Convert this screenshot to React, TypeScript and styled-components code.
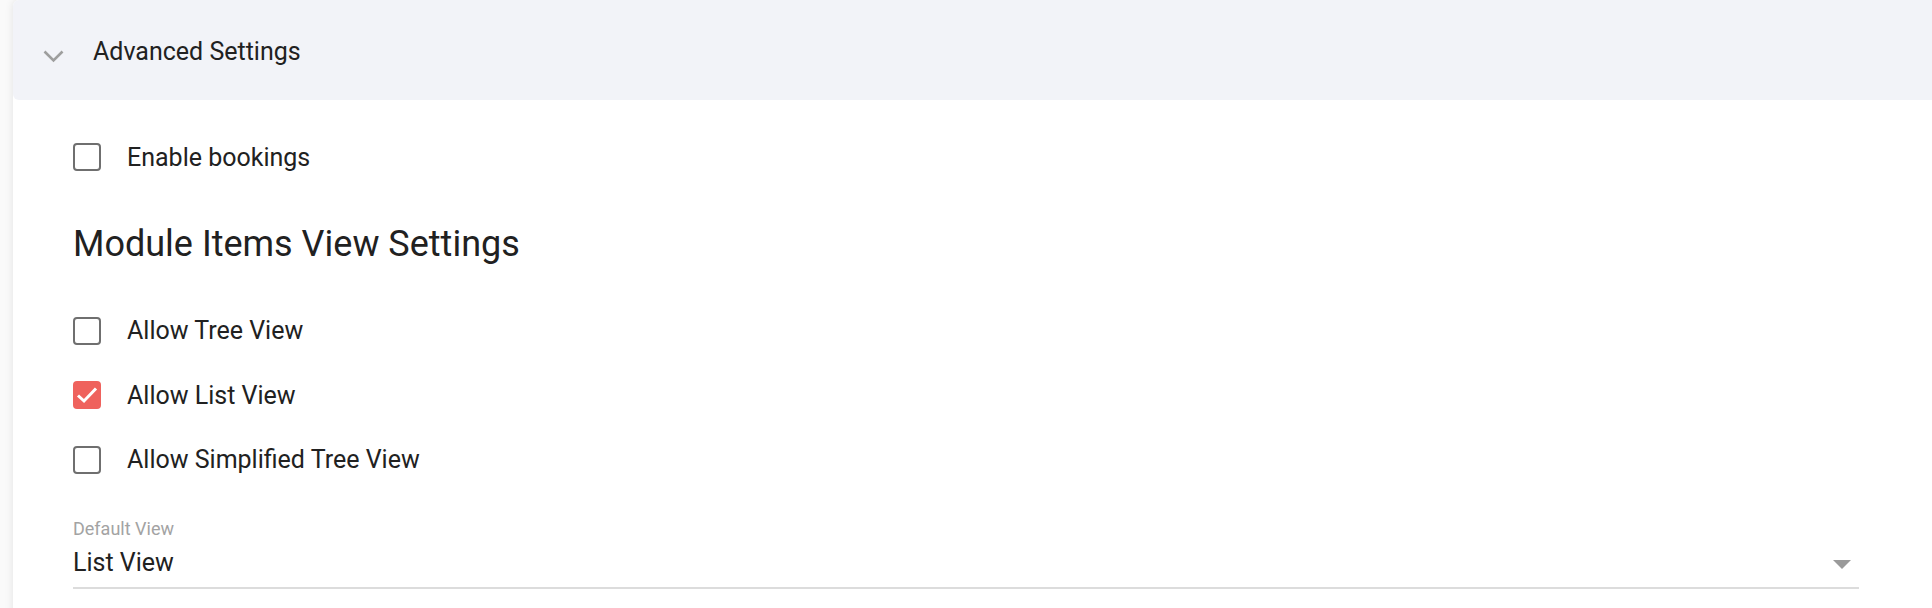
import React from 'react';
import styled, { createGlobalStyle } from 'styled-components';

const GlobalStyle = createGlobalStyle`
  html, body {
    margin: 0;
    padding: 0;
    background: #fafafa;
  }
  body {
    font-family: Roboto, "Liberation Sans", Arial, sans-serif;
    color: #212121;
  }
`;

const Page = styled.div`
  padding-left: 13px;
  height: 608px;
  overflow: hidden;
`;

const Card = styled.section`
  background: #fff;
  border-radius: 6px 0 0 6px;
  box-shadow: 0 0 9px rgba(0, 0, 0, 0.1);
  min-height: 640px;
  margin-right: -20px;
`;

const Header = styled.div`
  display: flex;
  align-items: center;
  height: 100px;
  background: #f2f3f8;
  border-radius: 6px 0 0 6px;
  box-sizing: border-box;
  padding-left: 30px;
  padding-top: 3px;
`;

const Chevron = styled.svg`
  width: 21px;
  height: 14px;
  margin-top: 10px;
  flex: none;
`;

const HeaderTitle = styled.span`
  margin-left: 29px;
  font-size: 25px;
  line-height: 1;
`;

const Body = styled.div`
  padding: 25px 93px 0 60px;
`;

const Row = styled.label`
  display: flex;
  align-items: center;
  height: 64.5px;
  font-size: 25px;
`;

const Box = styled.span<{ $checked?: boolean }>`
  width: 28px;
  height: 28px;
  box-sizing: border-box;
  border-radius: 4px;
  border: ${(p) => (p.$checked ? 'none' : '2.5px solid #6f6f6f')};
  background: ${(p) => (p.$checked ? '#ef625d' : 'transparent')};
  display: flex;
  align-items: center;
  justify-content: center;
  margin-right: 26px;
  flex: none;
`;

const Heading = styled.h2`
  margin: 30px 0 30.75px;
  font-size: 36px;
  line-height: 48px;
  font-weight: 400;
`;

const Field = styled.div`
  margin-top: 28.5px;
`;

const FieldLabel = styled.div`
  font-size: 18px;
  line-height: 18px;
  color: #a3a3a3;
`;

const Select = styled.div`
  display: flex;
  align-items: center;
  justify-content: space-between;
  margin-top: 6.5px;
  height: 36px;
  padding-bottom: 6px;
  border-bottom: 2px solid #dcdcdc;
  font-size: 25px;
`;

const Arrow = styled.svg`
  width: 18px;
  height: 9px;
  margin-right: 8px;
  margin-top: 3px;
`;

const Checkbox: React.FC<{ checked?: boolean; label: string }> = ({ checked, label }) => (
  <Row>
    <Box $checked={checked}>
      {checked && (
        <svg width="24" height="20" viewBox="0 0 24 20">
          <polyline points="3,10.5 9,16 21,3.5" fill="none" stroke="#fff" strokeWidth="3" />
        </svg>
      )}
    </Box>
    {label}
  </Row>
);

export default function App() {
  return (
    <Page>
      <GlobalStyle />
      <Card>
        <Header>
          <Chevron viewBox="0 0 21 14">
            <polyline points="1.5,1.5 10.5,10.5 19.5,1.5" fill="none" stroke="#9e9e9e" strokeWidth="2.6" />
          </Chevron>
          <HeaderTitle>Advanced Settings</HeaderTitle>
        </Header>
        <Body>
          <Checkbox label="Enable bookings" />
          <Heading>Module Items View Settings</Heading>
          <Checkbox label="Allow Tree View" />
          <Checkbox label="Allow List View" checked />
          <Checkbox label="Allow Simplified Tree View" />
          <Field>
            <FieldLabel>Default View</FieldLabel>
            <Select>
              <span>List View</span>
              <Arrow viewBox="0 0 18 9">
                <polygon points="0,0 18,0 9,9" fill="#9a9a9a" />
              </Arrow>
            </Select>
          </Field>
        </Body>
      </Card>
    </Page>
  );
}
